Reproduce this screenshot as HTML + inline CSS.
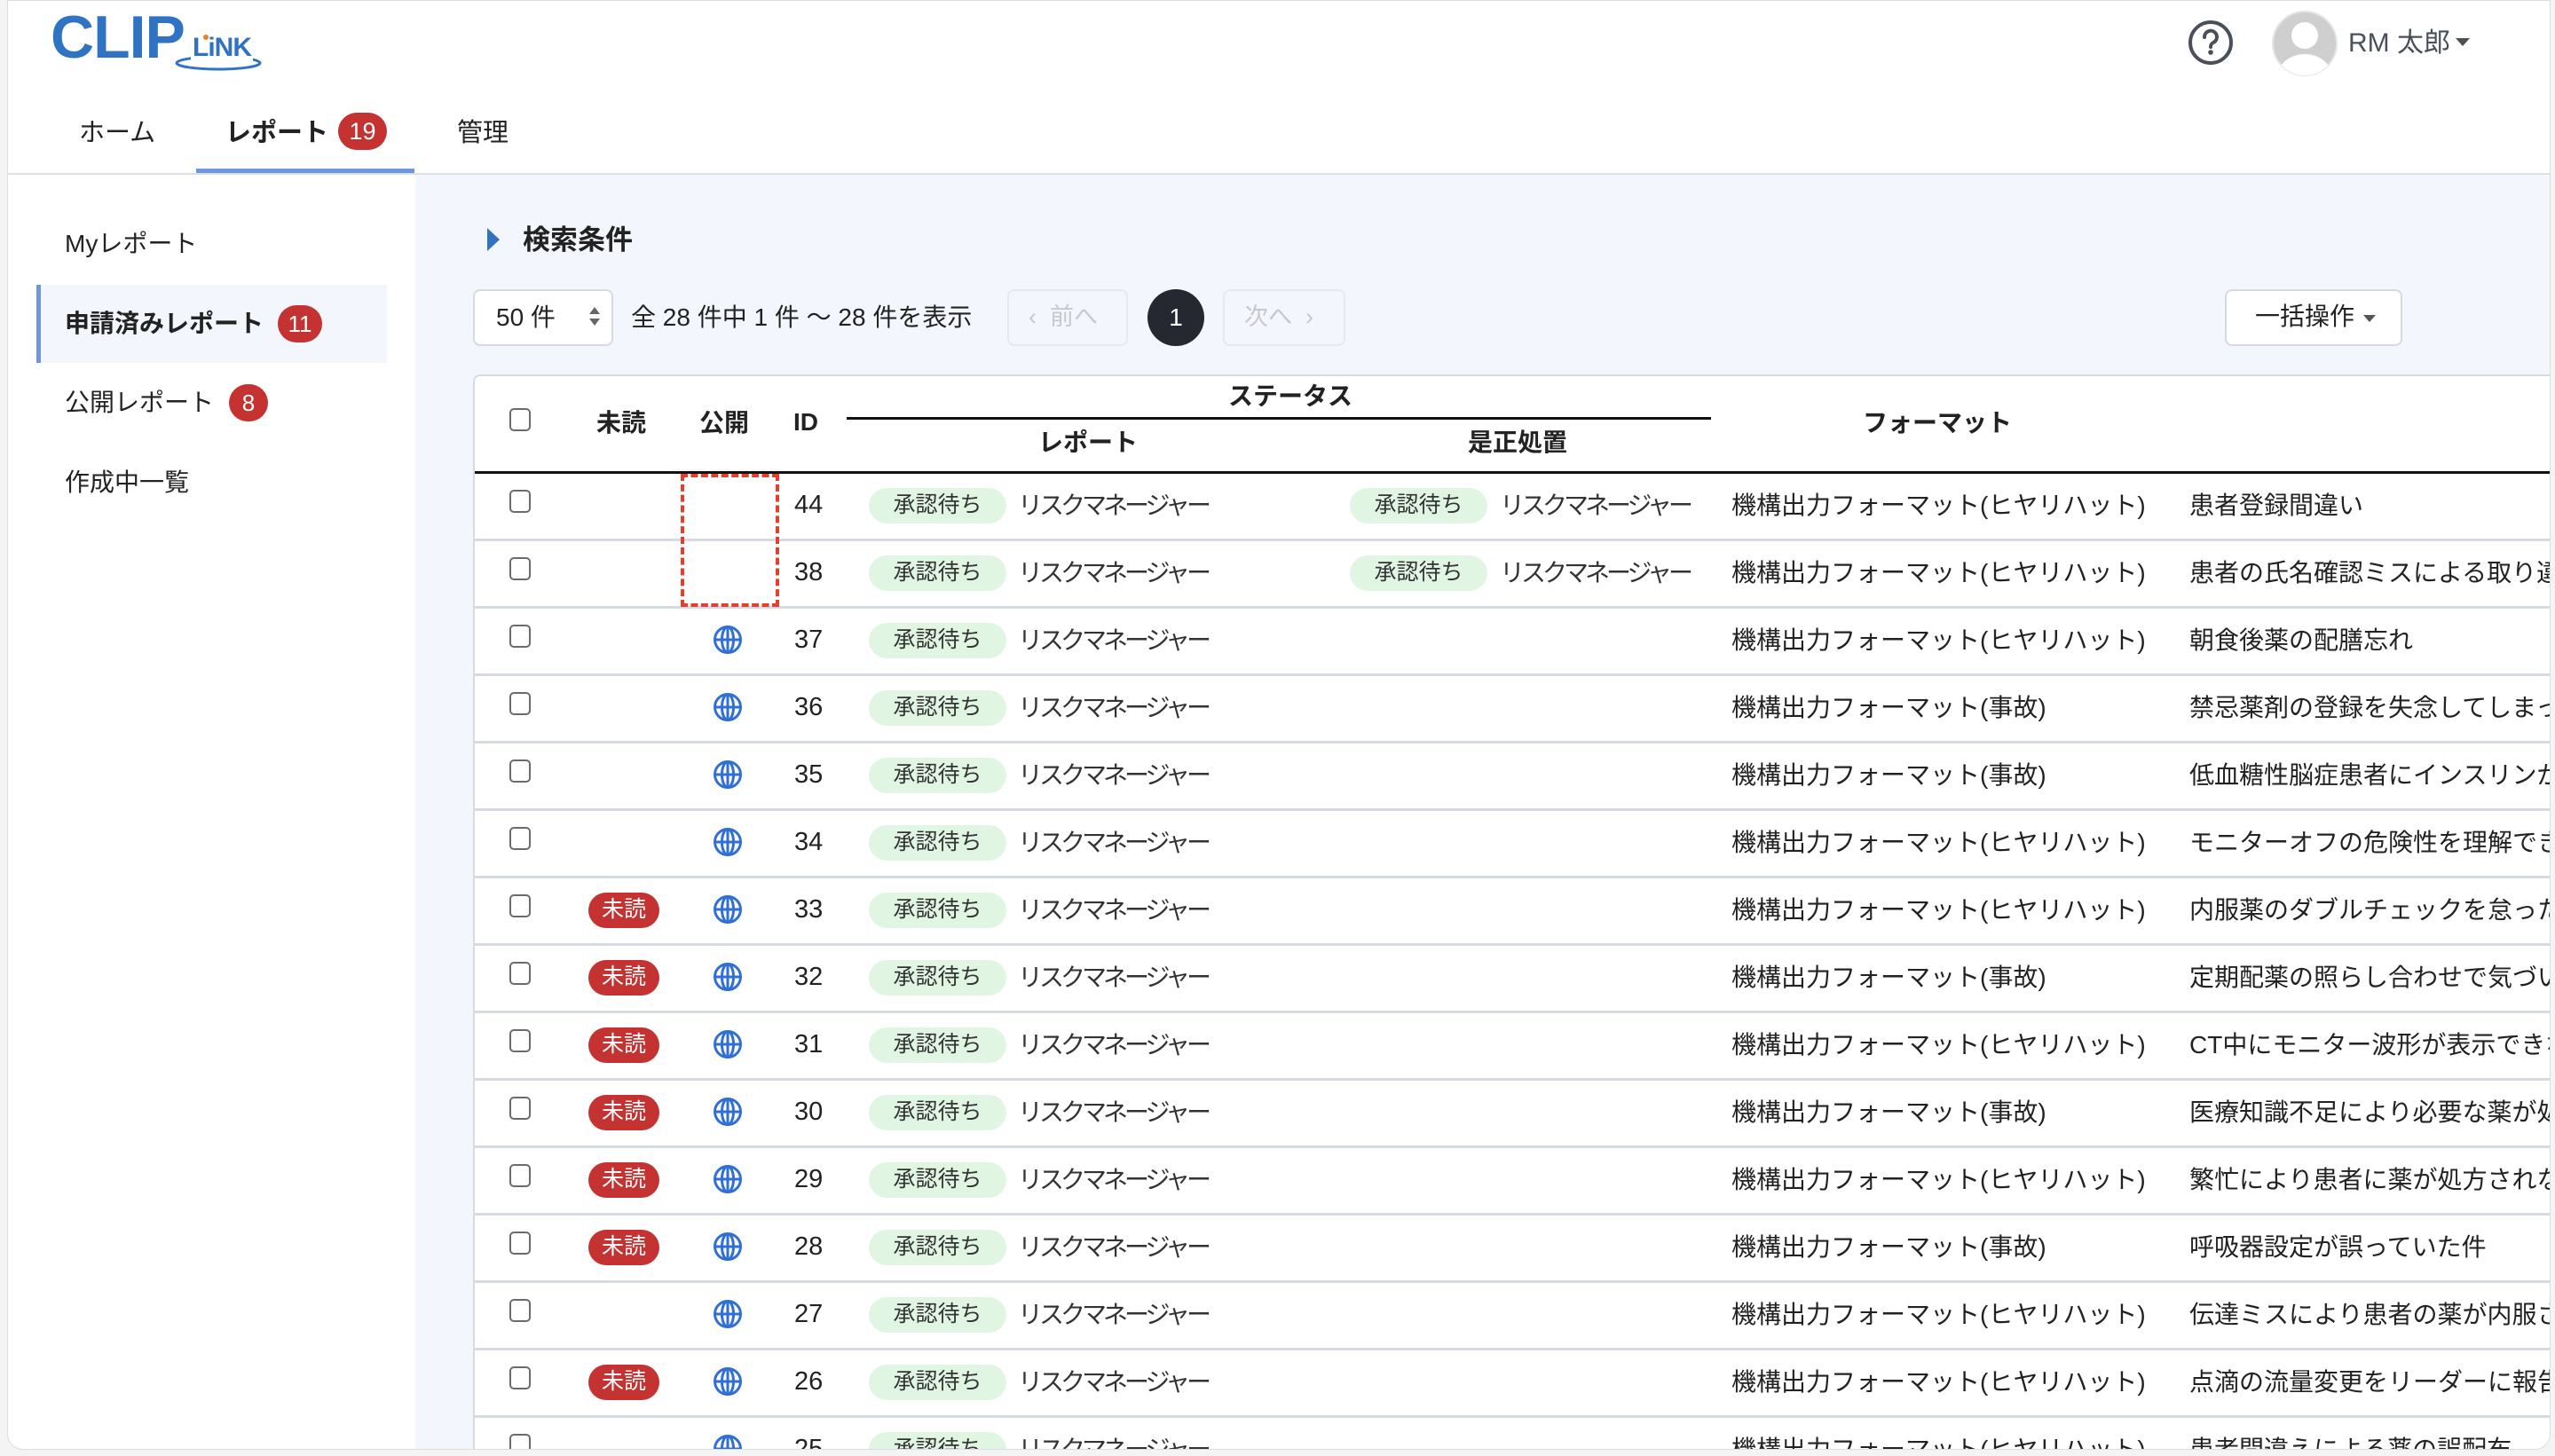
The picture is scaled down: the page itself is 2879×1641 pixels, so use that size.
<!DOCTYPE html>
<html><head><meta charset="utf-8">
<style>
*{box-sizing:border-box;margin:0;padding:0}
body{width:2879px;height:1641px;background:#f4f4f5;font-family:"Liberation Sans","Noto Sans CJK JP",sans-serif;color:#222;position:relative;overflow:hidden}
.ab{position:absolute}
#wrap{position:absolute;left:8px;top:0;width:2866px;height:1634px;background:#fff;border:1px solid #dcdde0;border-radius:0 0 18px 18px;overflow:hidden}
.badge{background:#c43332;color:#fff;border-radius:22px;text-align:center;font-size:25px}
.row{position:absolute;left:0;width:2340px;height:76px;border-top:3px solid #d6dae2}
.cb{position:absolute;width:24px;height:26px;border:2.5px solid #6b6b6b;border-radius:5px;background:#fff}
.pill{position:absolute;height:40px;line-height:38px;width:155px;text-align:center;background:#e0f6e2;border-radius:20px;font-size:25px;color:#333}
.t{position:absolute;font-size:28px;white-space:nowrap;color:#222}
.rm{letter-spacing:-4px;color:#333}
</style></head><body>
<div id="wrap">
 <div class="ab" style="left:48px;top:2px;font-weight:bold;font-size:68px;color:#2f73c2;letter-spacing:-1px">CLIP</div>
 <svg class="ab" style="left:185px;top:50px" width="110" height="32"><ellipse cx="52" cy="20" rx="47" ry="7" fill="none" stroke="#2f73c2" stroke-width="3"/></svg>
 <div class="ab" style="left:206px;top:38px;font-weight:bold;font-size:30px;color:#2f73c2;letter-spacing:-1px;background:#fff;line-height:30px;padding:0 2px">LiNK</div>
 <div class="ab" style="left:220px;top:38px;width:6px;height:6px;border-radius:50%;background:#e8832a"></div>

 <svg class="ab" style="left:2455px;top:20px" width="54" height="54"><circle cx="27" cy="27" r="23" fill="none" stroke="#4a5059" stroke-width="4"/><path d="M20 21a7 7 0 1 1 10 6c-2 1-3 2-3 5" fill="none" stroke="#4a5059" stroke-width="4" stroke-linecap="round"/><circle cx="27" cy="38" r="2.8" fill="#4a5059"/></svg>
 <svg class="ab" style="left:2550px;top:10px" width="76" height="76"><defs><clipPath id="cc"><circle cx="38" cy="38" r="36"/></clipPath></defs><circle cx="38" cy="38" r="36" fill="#cfcfcf" stroke="#e6e6e6" stroke-width="2"/><g clip-path="url(#cc)"><circle cx="38" cy="29" r="15" fill="#fff"/><ellipse cx="38" cy="74" rx="30" ry="24" fill="#fff"/></g></svg>
 <div class="ab" style="left:2637px;top:22px;font-size:30px;color:#4a5059">RM 太郎</div>
 <div class="ab" style="left:2758px;top:42px;width:0;height:0;border-left:8px solid transparent;border-right:8px solid transparent;border-top:9px solid #4a5059"></div>

 <div class="ab" style="left:80px;top:125px;font-size:29px">ホーム</div>
 <div class="ab" style="left:245px;top:125px;font-size:29px;font-weight:bold">レポート</div>
 <div class="ab badge" style="left:372px;top:126px;width:55px;height:42px;line-height:42px;font-size:27px">19</div>
 <div class="ab" style="left:506px;top:125px;font-size:29px">管理</div>
 <div class="ab" style="left:212px;top:189px;width:246px;height:5px;background:#7096e0"></div>
 <div class="ab" style="left:0;top:194px;width:2866px;height:2px;background:#dcdfe4"></div>

 <div class="ab" style="left:459px;top:196px;width:2410px;height:1440px;background:#f3f7fd"></div>
 <div class="ab" style="left:64px;top:252px;font-size:28px">Myレポート</div>
 <div class="ab" style="left:32px;top:320px;width:395px;height:88px;background:#f3f7fd;border-left:5px solid #7096e0"></div>
 <div class="ab" style="left:64px;top:342px;font-size:28px;font-weight:bold">申請済みレポート</div>
 <div class="ab badge" style="left:304px;top:343px;width:50px;height:42px;line-height:42px;font-size:26px">11</div>
 <div class="ab" style="left:64px;top:431px;font-size:28px">公開レポート</div>
 <div class="ab badge" style="left:249px;top:432px;width:44px;height:42px;line-height:42px;font-size:26px">8</div>
 <div class="ab" style="left:64px;top:521px;font-size:28px">作成中一覧</div>

 <div class="ab" style="left:540px;top:256px;width:0;height:0;border-top:13px solid transparent;border-bottom:13px solid transparent;border-left:14px solid #2f73c2"></div>
 <div class="ab" style="left:580px;top:244px;font-size:31px;font-weight:bold">検索条件</div>

 <div class="ab" style="left:524px;top:325px;width:158px;height:64px;background:#fff;border:2px solid #d6d9de;border-radius:8px"></div>
 <div class="ab" style="left:550px;top:335px;font-size:28px">50 件</div>
 <div class="ab" style="left:655px;top:345px;border-left:6px solid transparent;border-right:6px solid transparent;border-bottom:8px solid #666"></div>
 <div class="ab" style="left:655px;top:358px;border-left:6px solid transparent;border-right:6px solid transparent;border-top:8px solid #666"></div>
 <div class="ab" style="left:702px;top:335px;font-size:28px">全 28 件中 1 件 ～ 28 件を表示</div>

 <div class="ab" style="left:1126px;top:325px;width:136px;height:64px;border:2px solid #e6e9ef;border-radius:8px;color:#c8c8cc;font-size:27px;line-height:58px;padding-left:22px">‹&nbsp; 前へ</div>
 <div class="ab" style="left:1284px;top:325px;width:64px;height:64px;border-radius:50%;background:#252830;color:#fff;font-size:28px;line-height:64px;text-align:center">1</div>
 <div class="ab" style="left:1369px;top:325px;width:138px;height:64px;border:2px solid #e6e9ef;border-radius:8px;color:#c8c8cc;font-size:27px;line-height:58px;padding-left:22px">次へ &nbsp;›</div>

 <div class="ab" style="left:2498px;top:325px;width:200px;height:64px;background:#fff;border:2px solid #d6d9de;border-radius:8px;font-size:28px;line-height:58px;padding-left:32px">一括操作</div>
 <div class="ab" style="left:2654px;top:354px;border-left:7px solid transparent;border-right:7px solid transparent;border-top:8px solid #555"></div>

 <div class="ab" style="left:524px;top:421px;width:2350px;height:1220px;background:#fff;border-left:2px solid #d6dae2;border-top:2px solid #d6dae2;border-radius:8px 0 0 0;overflow:hidden">
  <div style="position:absolute;left:-11px;top:0;width:2370px;height:1220px">
  <div class="cb" style="left:50px;top:36px"></div>
  <div class="t" style="left:148px;top:31px;font-weight:bold">未読</div>
  <div class="t" style="left:264px;top:31px;font-weight:bold">公開</div>
  <div class="t" style="left:370px;top:36px;font-weight:bold">ID</div>
  <div class="t" style="left:860px;top:1px;font-weight:bold">ステータス</div>
  <div class="ab" style="left:430px;top:46px;width:974px;height:3px;background:#111"></div>
  <div class="t" style="left:646px;top:53px;font-weight:bold">レポート</div>
  <div class="t" style="left:1130px;top:53px;font-weight:bold">是正処置</div>
  <div class="t" style="left:1575px;top:31px;font-weight:bold">フォーマット</div>
  <div class="ab" style="left:0;top:107px;width:2370px;height:3px;background:#111"></div>
  <div id="rows"></div>
  <div class="ab" style="left:243px;top:110px;width:111px;height:150px;border:4px dashed #e53e2a"></div>
  </div>
 </div>
</div>
<script>
var d=[[44,0,0,1,'H','患者登録間違い'],[38,0,0,1,'H','患者の氏名確認ミスによる取り違え'],[37,0,1,0,'H','朝食後薬の配膳忘れ'],[36,0,1,0,'J','禁忌薬剤の登録を失念してしまった'],[35,0,1,0,'J','低血糖性脳症患者にインスリンが'],[34,0,1,0,'H','モニターオフの危険性を理解できず'],[33,1,1,0,'H','内服薬のダブルチェックを怠った'],[32,1,1,0,'J','定期配薬の照らし合わせで気づいた'],[31,1,1,0,'H','CT中にモニター波形が表示できない'],[30,1,1,0,'J','医療知識不足により必要な薬が処方'],[29,1,1,0,'H','繁忙により患者に薬が処方されなかった'],[28,1,1,0,'J','呼吸器設定が誤っていた件'],[27,0,1,0,'H','伝達ミスにより患者の薬が内服されず'],[26,1,1,0,'H','点滴の流量変更をリーダーに報告せず'],[25,0,1,0,'H','患者間違えによる薬の誤配布']];
var g='<svg width="34" height="34" viewBox="0 0 34 34" style="position:absolute;left:279px;top:18px"><g fill="none" stroke="#2f6fd6" stroke-width="3"><circle cx="17" cy="17" r="14.5"/><ellipse cx="17" cy="17" rx="6.5" ry="14.5"/><path d="M2.5 17h29M17 2.5v29"/></g></svg>';
var h='';
d.forEach(function(r,i){var top=107+i*76;
h+='<div class="row" style="top:'+(i==0?top+3:top)+'px;width:2370px;'+(i==0?'border-top:none':'')+'">'
+'<div class="cb" style="left:50px;top:18px"></div>'
+(r[1]?'<div class="badge" style="position:absolute;left:139px;top:16px;width:80px;height:40px;line-height:38px">未読</div>':'')
+(r[2]?g:'')
+'<div class="t" style="left:371px;top:19px;font-size:29px">'+r[0]+'</div>'
+'<div class="pill" style="left:455px;top:16px">承認待ち</div>'
+'<div class="t rm" style="left:623px;top:14px">リスクマネージャー</div>'
+(r[3]?'<div class="pill" style="left:997px;top:16px">承認待ち</div><div class="t rm" style="left:1166px;top:14px">リスクマネージャー</div>':'')
+'<div class="t" style="left:1427px;top:14px">機構出力フォーマット('+(r[4]=='H'?'ヒヤリハット':'事故')+')</div>'
+'<div class="t" style="left:1943px;top:14px">'+r[5]+'</div></div>';});
document.getElementById('rows').innerHTML=h;
</script>
</body></html>
